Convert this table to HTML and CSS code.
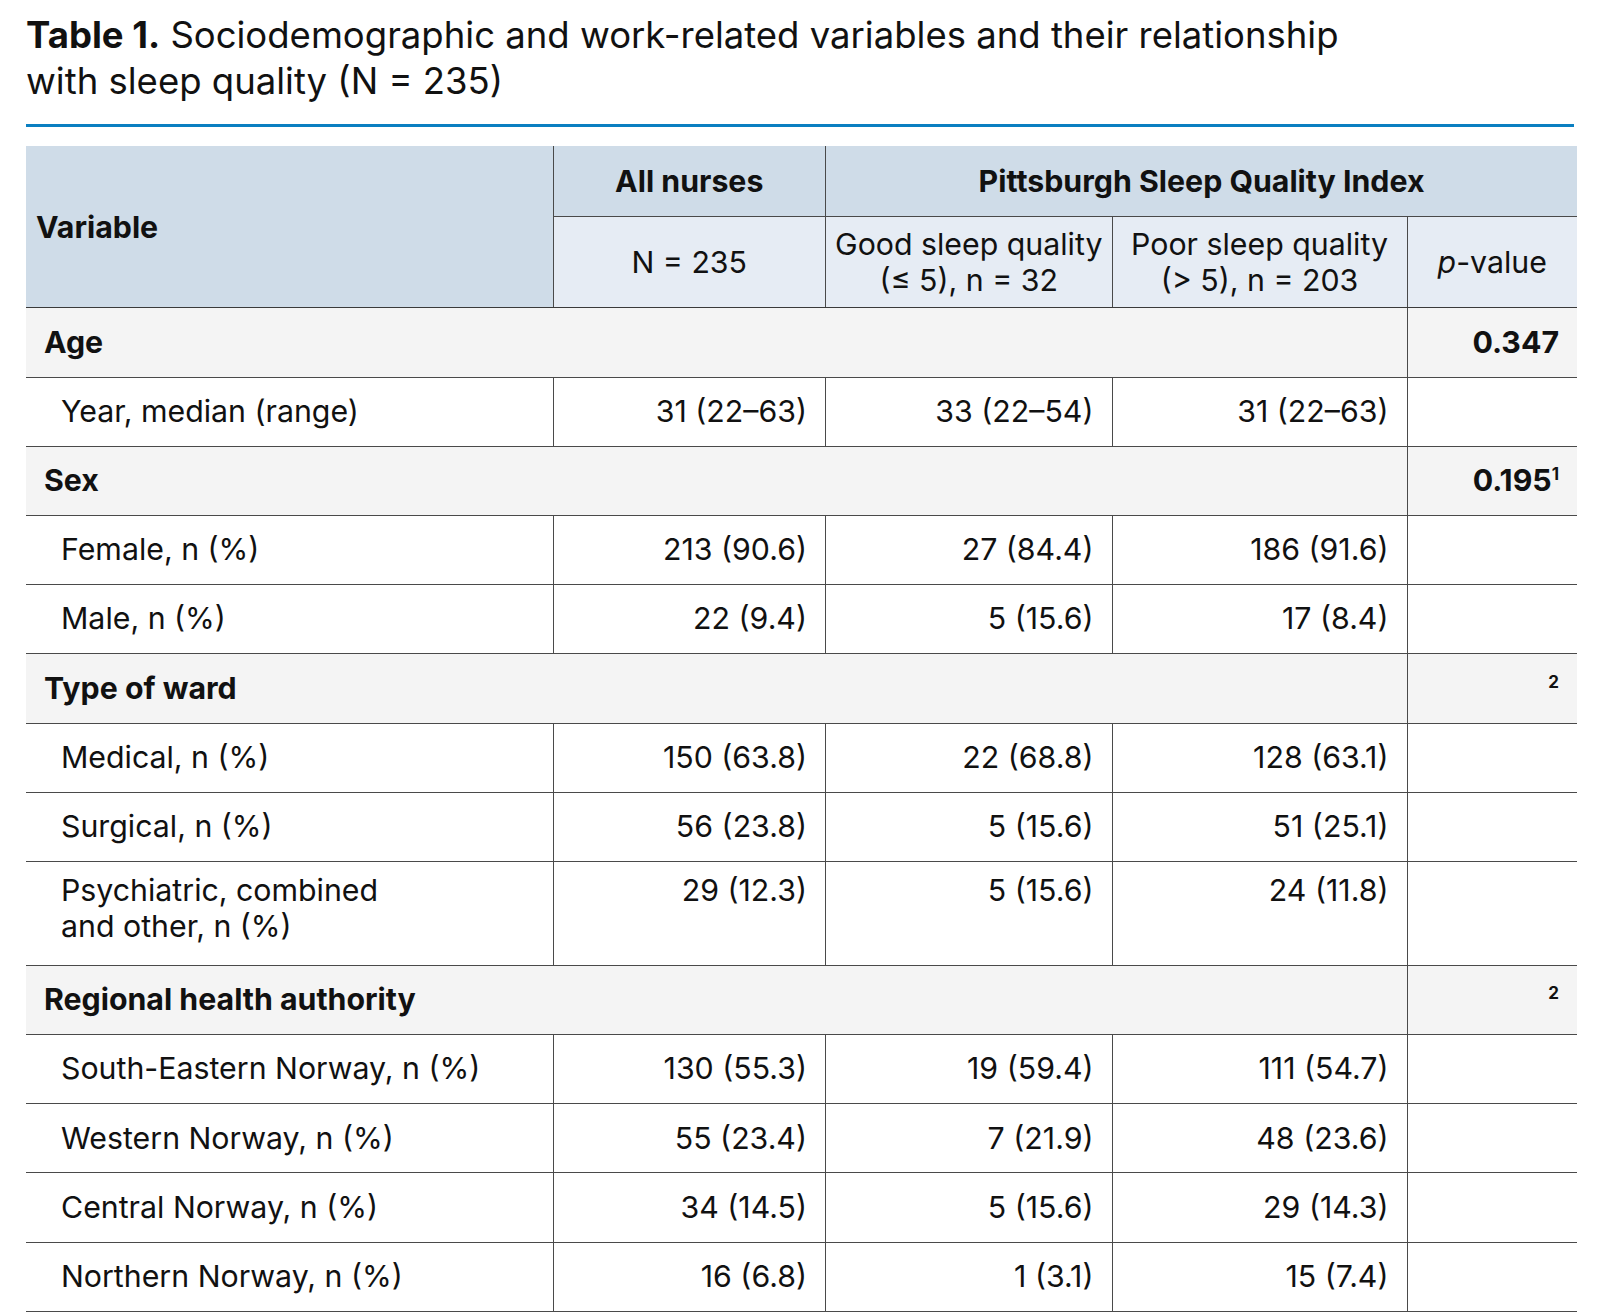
FILE: index.html
```html
<!DOCTYPE html>
<html lang="en">
<head>
<meta charset="utf-8">
<title>Table 1</title>
<link rel="stylesheet" href="styles.css">
</head>
<body>
<div class="page">
  <h1 class="caption"><span class="label">Table 1.</span> Sociodemographic and work-related variables and their relationship with sleep quality (N = 235)</h1>
  <div class="rule"></div>
  <table class="data">
    <colgroup>
      <col class="c-var">
      <col class="c-all">
      <col class="c-good">
      <col class="c-poor">
      <col class="c-p">
    </colgroup>
    <thead>
      <tr class="h-top">
        <th rowspan="2" class="h-var">Variable</th>
        <th class="h-grp">All nurses</th>
        <th colspan="3" class="h-grp">Pittsburgh Sleep Quality Index</th>
      </tr>
      <tr class="h-sub">
        <th>N = 235</th>
        <th>Good sleep quality<br>(≤ 5), n = 32</th>
        <th>Poor sleep quality<br>(&gt; 5), n = 203</th>
        <th><i>p</i>-value</th>
      </tr>
    </thead>
    <tbody>
      <tr class="group"><td colspan="4">Age</td><td class="pv">0.347</td></tr>
      <tr class="item"><td>Year, median (range)</td><td>31 (22–63)</td><td>33 (22–54)</td><td>31 (22–63)</td><td></td></tr>
      <tr class="group"><td colspan="4">Sex</td><td class="pv">0.195<sup>1</sup></td></tr>
      <tr class="item"><td>Female, n (%)</td><td>213 (90.6)</td><td>27 (84.4)</td><td>186 (91.6)</td><td></td></tr>
      <tr class="item"><td>Male, n (%)</td><td>22 (9.4)</td><td>5 (15.6)</td><td>17 (8.4)</td><td></td></tr>
      <tr class="group"><td colspan="4">Type of ward</td><td class="pv"><sup>2</sup></td></tr>
      <tr class="item"><td>Medical, n (%)</td><td>150 (63.8)</td><td>22 (68.8)</td><td>128 (63.1)</td><td></td></tr>
      <tr class="item"><td>Surgical, n (%)</td><td>56 (23.8)</td><td>5 (15.6)</td><td>51 (25.1)</td><td></td></tr>
      <tr class="item item-multi"><td>Psychiatric, combined<br>and other, n (%)</td><td>29 (12.3)</td><td>5 (15.6)</td><td>24 (11.8)</td><td></td></tr>
      <tr class="group"><td colspan="4">Regional health authority</td><td class="pv"><sup>2</sup></td></tr>
      <tr class="item"><td>South-Eastern Norway, n (%)</td><td>130 (55.3)</td><td>19 (59.4)</td><td>111 (54.7)</td><td></td></tr>
      <tr class="item"><td>Western Norway, n (%)</td><td>55 (23.4)</td><td>7 (21.9)</td><td>48 (23.6)</td><td></td></tr>
      <tr class="item"><td>Central Norway, n (%)</td><td>34 (14.5)</td><td>5 (15.6)</td><td>29 (14.3)</td><td></td></tr>
      <tr class="item"><td>Northern Norway, n (%)</td><td>16 (6.8)</td><td>1 (3.1)</td><td>15 (7.4)</td><td></td></tr>
    </tbody>
  </table>
</div>
</body>
</html>
```

FILE: styles.css
```css
html, body {
  margin: 0;
  padding: 0;
  background: #ffffff;
  overflow: hidden;
}

body {
  font-family: Inter, "Noto Sans", "Liberation Sans", sans-serif;
  color: #111111;
}

.page {
  width: 1551px;
  padding: 13px 0 0 26px;
}

.caption {
  margin: 0;
  max-width: 1340px;
  font-size: 36.5px;
  line-height: 45.7px;
  font-weight: 400;
}

.caption .label {
  font-weight: 700;
}

.rule {
  height: 3px;
  background: #0a7fc1;
  margin: 20px 0 19px 0;
  width: 1548px;
}

.data {
  width: 1551px;
  table-layout: fixed;
  border-collapse: collapse;
  font-size: 30.3px;
  line-height: 36px;
}

.c-var { width: 527px; }
.c-all { width: 272.5px; }
.c-good { width: 286.5px; }
.c-poor { width: 295px; }
.c-p { width: 170px; }

/* header */
.data th {
  font-weight: 700;
  text-align: center;
  vertical-align: middle;
  padding: 17px 4px;
}

.h-top th {
  background: #cfdce8;
  border-bottom: 1px solid #4a4a4a;
}

.h-top th + th {
  border-left: 1px solid #4a4a4a;
}

.h-top .h-var {
  text-align: left;
  padding-left: 10px;
  border-bottom: 1px solid #3a3a3a;
}

.h-sub th {
  background: #e6ecf4;
  font-weight: 400;
  padding: 9px 2px;
  border-left: 1px solid #4a4a4a;
  border-bottom: 1px solid #3a3a3a;
}

/* body */
.data td {
  padding: 15.3px 18px 16.9px 18px;
  vertical-align: top;
  text-align: right;
  border-bottom: 1px solid #4a4a4a;
}

.group td {
  background: #f4f4f4;
  font-weight: 700;
}

.group td:first-child {
  text-align: left;
  padding-left: 18px;
}

.group .pv {
  border-left: 1px solid #4a4a4a;
  vertical-align: middle;
}

.item td {
  border-left: 1px solid #4a4a4a;
}

.item td:first-child {
  text-align: left;
  padding-left: 35px;
  border-left: none;
}

.item-multi td {
  padding-top: 9.8px;
  padding-bottom: 21.2px;
}

sup {
  font-size: 17px;
  line-height: 0;
  vertical-align: 11px;
}
```
